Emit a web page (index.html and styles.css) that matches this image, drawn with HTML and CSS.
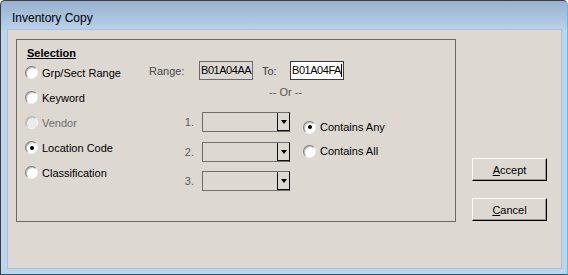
FILE: index.html
```html
<!DOCTYPE html>
<html lang="en">
<head>
  <meta charset="UTF-8">
  <title>Inventory Copy</title>
  <link rel="stylesheet" href="styles.css">
</head>
<body>
  <div class="window">
    <div class="titlebar">Inventory Copy</div>
    <div class="content">
      <div class="group">
        <div class="sel-col">
          <div class="sel-title">Selection</div>
          <div class="radio-row"><span class="radio"></span>Grp/Sect Range</div>
          <div class="radio-row"><span class="radio"></span>Keyword</div>
          <div class="radio-row disabled"><span class="radio"></span>Vendor</div>
          <div class="radio-row"><span class="radio checked"></span>Location Code</div>
          <div class="radio-row"><span class="radio"></span>Classification</div>
        </div>
        <div class="right-col">
          <div class="range-row">
            <span class="lbl-range">Range:</span>
            <div class="box readonly">B01A04AA</div>
            <span class="lbl-to">To:</span>
            <div class="box edit">B01A04FA<span class="caret"></span></div>
          </div>
          <div class="or">-- Or --</div>
          <div class="lower">
            <div class="drops">
              <div class="drop-row"><span class="num">1.</span><div class="combo"><span class="combo-btn"></span></div></div>
              <div class="drop-row"><span class="num">2.</span><div class="combo"><span class="combo-btn"></span></div></div>
              <div class="drop-row"><span class="num">3.</span><div class="combo"><span class="combo-btn"></span></div></div>
            </div>
            <div class="contains">
              <div class="radio-row small"><span class="radio checked"></span>Contains Any</div>
              <div class="radio-row small"><span class="radio"></span>Contains All</div>
            </div>
          </div>
        </div>
      </div>
      <div class="actions">
        <button class="btn"><u>A</u>ccept</button>
        <button class="btn"><u>C</u>ancel</button>
      </div>
    </div>
  </div>
</body>
</html>
```

FILE: styles.css
```css
body {
  margin: 0;
  font-family: "Liberation Sans", Arial, sans-serif;
  font-size: 11px;
  color: #000;
}
.window {
  width: 568px;
  height: 275px;
  box-sizing: border-box;
  border: 1px solid #3c3c3c;
  border-right-color: #4cc6e6;
  border-bottom-color: #24586a;
  border-radius: 5px 5px 0 0;
  background: linear-gradient(#97b1cf, #b9d1ea 29px, #bcd4ec 29px);
  padding: 0 6px 6px 7px;
  display: flex;
  flex-direction: column;
}
.titlebar {
  height: 29px;
  box-sizing: border-box;
  padding: 10px 0 0 4px;
  line-height: 14px;
  font-size: 12px;
  color: #000;
}
.content {
  flex: 1;
  background: #ded8d2;
  box-shadow: 0 0 0 1px #a9c0d8;
  display: flex;
  align-items: flex-start;
}
.group {
  width: 440px;
  height: 183px;
  box-sizing: border-box;
  margin: 9px 0 0 8px;
  border: 1px solid #6a6a6a;
  display: flex;
}
.sel-col {
  width: 132px;
  box-sizing: border-box;
  padding: 7px 0 0 8px;
}
.sel-title {
  margin-left: 2px;
  font-weight: bold;
  text-decoration: underline;
  line-height: 13px;
}
.radio-row {
  height: 25px;
  display: flex;
  align-items: center;
  gap: 4px;
  white-space: nowrap;
}
.radio-row.small {
  height: 24px;
}
.radio {
  width: 13px;
  height: 13px;
  box-sizing: border-box;
  border-radius: 50%;
  border: 1px solid #7c7c7c;
  border-right-color: #f4f4f4;
  border-bottom-color: #f4f4f4;
  background: #fff;
  box-shadow: inset 1px 1px 0 #bdbdbd;
  display: flex;
  align-items: center;
  justify-content: center;
  flex-shrink: 0;
}
.radio.checked::after {
  content: "";
  width: 4px;
  height: 4px;
  border-radius: 50%;
  background: #000;
}
.disabled {
  color: #6d6d6d;
}
.disabled .radio {
  background: #ececec;
  border-color: #b8b8b8 #f6f6f6 #f6f6f6 #b8b8b8;
}
.right-col {
  padding-top: 21px;
}
.range-row {
  display: flex;
  align-items: center;
  height: 19px;
}
.lbl-range {
  width: 50px;
  color: #4a4a4a;
}
.lbl-to {
  width: 28px;
  margin-left: 9px;
  color: #3a3a3a;
}
.box {
  width: 54px;
  height: 19px;
  box-sizing: border-box;
  padding-left: 1px;
  line-height: 17px;
  letter-spacing: -0.45px;
  white-space: nowrap;
  overflow: hidden;
  border: 1px solid #6a6a6a;
}
.box.edit {
  background: #fff;
  border-color: #3a3a3a;
}
.caret {
  display: inline-block;
  width: 1px;
  height: 13px;
  background: #000;
  vertical-align: -3px;
}
.or {
  margin: 6px 0 0 120px;
  line-height: 13px;
  color: #555;
}
.lower {
  display: flex;
  margin-top: 13px;
}
.drops {
  display: flex;
  flex-direction: column;
  gap: 10px;
}
.drop-row {
  display: flex;
  align-items: center;
  height: 20px;
}
.drop-row:last-child {
  margin-top: -1px;
}
.num {
  width: 53px;
  box-sizing: border-box;
  padding-right: 8px;
  text-align: right;
  color: #5a5a5a;
}
.combo {
  width: 88px;
  height: 20px;
  box-sizing: border-box;
  border: 1px solid #6e6e6e;
  border-right-color: #111;
  display: flex;
  justify-content: flex-end;
}
.combo-btn {
  width: 11px;
  border-left: 1px solid #111;
  border-bottom: 1px solid #111;
  display: flex;
  align-items: center;
  justify-content: center;
}
.combo-btn::after {
  content: "";
  border-left: 3.5px solid transparent;
  border-right: 3.5px solid transparent;
  border-top: 4px solid #000;
}
.contains {
  margin: 3px 0 0 13px;
}
.actions {
  margin: 128px 0 0 16px;
  display: flex;
  flex-direction: column;
  gap: 17px;
}
.btn {
  width: 75px;
  height: 23px;
  padding: 0;
  font-family: inherit;
  font-size: 11px;
  color: #000;
  background: #ded8d2;
  border: 1px solid #fff;
  border-right-color: #000;
  border-bottom-color: #000;
  box-shadow: inset -1px -1px 0 #a09a94;
}
```
